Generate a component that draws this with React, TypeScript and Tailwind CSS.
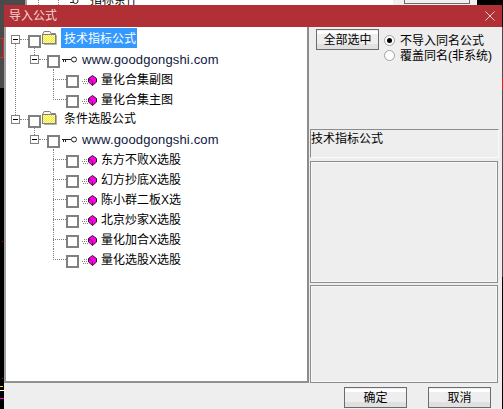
const FONT = "font-['Liberation_Sans','Noto_Sans_CJK_SC',sans-serif]";

function TreeBox() {
  return <div className="mt-[6px] h-[13px] w-[13px] shrink-0 border-2 border-[#808080] bg-white" />;
}

function Minus() {
  return (
    <div className="mt-[6px] flex h-[9px] w-[9px] shrink-0 items-center justify-center border border-[#808080] bg-white">
      <div className="h-px w-[5px] bg-black" />
    </div>
  );
}

function Folder() {
  return (
    <svg width="15" height="14" viewBox="0 0 15 14" className="mt-[2px] ml-[1px] shrink-0">
      <defs>
        <pattern id="dither" width="2" height="2" patternUnits="userSpaceOnUse">
          <rect width="2" height="2" fill="#f6f000" />
          <rect width="1" height="1" fill="#fffbe0" />
          <rect x="1" y="1" width="1" height="1" fill="#fffbe0" />
        </pattern>
      </defs>
      <path d="M0.5 3.5 L2 0.5 H8 L9 2.5 H13.5 V4 H0.5 Z" fill="#f8f8e8" stroke="#808080" />
      <rect x="0.5" y="3.5" width="13" height="9" fill="url(#dither)" stroke="#808080" />
      <path d="M14.5 4 V13.5 H2" stroke="#b0b0b0" fill="none" />
    </svg>
  );
}

function KeyIcon() {
  return (
    <svg width="15" height="7" viewBox="0 0 15 7" className="mt-[7px] ml-[2px] shrink-0">
      <path d="M0 3.5 H9 M1.5 3.5 V6 M3.5 3.5 V6" stroke="#222" fill="none" />
      <circle cx="12" cy="3.5" r="2.5" fill="white" stroke="#222" />
    </svg>
  );
}

function Gem() {
  return (
    <svg width="16" height="11" viewBox="0 0 16 11" className="mt-[6px] ml-[2px] shrink-0">
      <path d="M3 4.5 H7 M1 6.5 H7 M2 8.5 H7" stroke="#808080" strokeDasharray="1 1" />
      <path d="M11.5 0.5 L15.5 3.5 V7 L11.5 10.5 L7.5 7 V3.5 Z" fill="#ff00e6" stroke="#202020" />
      <path d="M7.5 3.5 L11.5 6 V10.5" fill="none" stroke="#8a0080" />
    </svg>
  );
}

function Leaf({ text, last }: { text: string; last?: boolean }) {
  return (
    <div className="relative flex h-5 pl-[60px]">
      <div className={"absolute left-[47px] top-0 w-px border-l border-dotted border-[#808080] " + (last ? "h-[11px]" : "h-5")} />
      <div className="absolute left-[47px] top-[10px] w-[13px] border-t border-dotted border-[#808080]" />
      <TreeBox />
      <Gem />
      <span className="ml-[4px] pt-px text-[12px] leading-5 text-black">{text}</span>
    </div>
  );
}

function Site() {
  return (
    <div className="relative flex h-5 pl-[24px]">
      <div className="absolute left-[28px] top-[-2px] h-[8px] w-px border-l border-dotted border-[#808080]" />
      <div className="absolute left-[33px] top-[10px] w-[8px] border-t border-dotted border-[#808080]" />
      <Minus />
      <div className="ml-[8px]"><TreeBox /></div>
      <KeyIcon />
      <span className="ml-[5px] pt-px text-[13px] leading-5 tracking-[0.16px] text-[#10183c]">www.goodgongshi.com</span>
    </div>
  );
}

function Root({ text, selected }: { text: string; selected?: boolean }) {
  return (
    <div className="relative flex h-5 pl-[5px]">
      <div className="absolute left-[14px] top-[10px] w-[8px] border-t border-dotted border-[#808080]" />
      <Minus />
      <div className="ml-[8px]"><TreeBox /></div>
      <Folder />
      <span className={"-mt-px ml-[4px] h-5 w-[76px] pl-[3px] pt-px text-[12px] leading-5 " + (selected ? "bg-[#3399ff] text-white" : "text-black")}>{text}</span>
    </div>
  );
}

function Btn({ text }: { text: string }) {
  return (
    <div className="flex h-[21px] w-[63px] shrink-0 items-center justify-center border border-[#6c6c6c] bg-[linear-gradient(#eeeeee_0,#eeeeee_1px,#ffffff_1px,#ffffff_4px,#eeeeee_4px,#eeeeee_14px,#e0e0e0_14px)] text-[12px] text-black">
      {text}
    </div>
  );
}

function Radio({ on, text }: { on?: boolean; text: string }) {
  return (
    <div className="flex h-[15px] items-center">
      <div className="flex h-[11px] w-[11px] items-center justify-center rounded-full border border-[#a0a0a0] bg-white">
        {on && <div className="h-[5px] w-[5px] rounded-full bg-black" />}
      </div>
      <span className="ml-[5px] whitespace-nowrap pt-px text-[12px] leading-[15px] text-black">{text}</span>
    </div>
  );
}

export default function App() {
  return (
    <div className={"relative h-[409px] w-[503px] overflow-hidden bg-black " + FONT}>
      {/* what shows of the chart and the dialog behind */}
      <div className="absolute left-0 top-0 h-[88px] w-[4px] bg-[#4a4a4a]" />
      <div className="absolute left-0 top-[38px] h-[20px] w-[4px] border-y border-r border-[#f02020]" />
      <div className="absolute left-[2px] top-[241px] h-px w-px bg-[#e00000]" />
      <div className="absolute left-[2px] top-[378px] h-px w-px bg-[#e00000]" />
      <div className="absolute left-0 top-[386px] h-px w-[3px] bg-[#f0e000]" />
      <div className="absolute left-0 top-[390px] h-px w-[4px] bg-white" />
      <div className="absolute left-0 top-[398px] h-px w-[4px] bg-[#ff00e0]" />
      <div className="absolute left-[502px] top-[27px] h-[250px] w-px bg-[#4a4a4a]" />
      <div className="absolute left-[502px] top-[78px] h-[12px] w-px bg-[#e02020]" />

      <div className="flex h-[5px] overflow-hidden">
        <div className="w-[25px] bg-[#4a4a4a]" />
        <div className="w-[2px] bg-[#a0a0a0]" />
        <div className="relative w-[366px] bg-white">
          <div className="absolute left-[11px] top-0 h-[5px] w-px border-l border-dotted border-[#808080]" />
          <div className="absolute left-[31px] top-0 h-[5px] w-px border-l border-dotted border-[#808080]" />
          <svg width="9" height="5" viewBox="0 0 9 5" className="absolute left-[43px] top-0">
            <path d="M0 2.5 H4" stroke="#222" fill="none" />
            <circle cx="5.5" cy="1" r="2.5" fill="white" stroke="#222" />
          </svg>
          <span className="absolute left-[63px] top-[-10px] text-[12px] leading-[20px] text-black">指标条件</span>
        </div>
        <div className="w-[84px] bg-[#f0f0f0] pl-[11px]">
          <div className="h-[4px] w-[66px] border-x border-b border-[#6c6c6c]" />
        </div>
      </div>
      <div className="relative ml-[4px] flex h-[404px] w-[498px] flex-col bg-[#eeeeee]">
        <div className="flex h-[22px] shrink-0 items-center justify-between bg-[#b03035] pl-[5px] pr-[7px] text-[12px] text-[#f0d8d8]">
          <span>导入公式</span>
          <svg width="10" height="10" viewBox="0 0 10 10"><path d="M0.5 0.5 L9.5 9.5 M9.5 0.5 L0.5 9.5" stroke="#ecd0d0" /></svg>
        </div>
        <div className="flex h-[356px] shrink-0">
          <div className="relative h-[356px] w-[305px] shrink-0 border-r-2 border-b-2 border-l-2 border-r-[#8c8c8c] border-b-[#909090] border-l-[#a0a0a0] bg-white pt-[2px]">
            <div className="absolute left-[9px] top-[16px] h-[72px] w-px border-l border-dotted border-[#808080]" />
            <Root text="技术指标公式" selected />
            <Site />
            <Leaf text="量化合集副图" />
            <Leaf text="量化合集主图" last />
            <Root text="条件选股公式" />
            <Site />
            <Leaf text="东方不败X选股" />
            <Leaf text="幻方抄底X选股" />
            <Leaf text="陈小群二板X选" />
            <Leaf text="北京炒家X选股" />
            <Leaf text="量化加合X选股" />
            <Leaf text="量化选股X选股" last />
          </div>
          <div className="w-[193px] pl-[1px]">
            <div className="flex h-[102px] pl-[6px] pt-[2px]">
              <Btn text="全部选中" />
              <div className="ml-[5px] pt-[4px]">
                <Radio on text="不导入同名公式" />
                <Radio text="覆盖同名(非系统)" />
              </div>
            </div>
            <div className="h-[29px] w-[189px] border border-[#8c8c8c] border-r-[#fafafa] border-b-[#fafafa] text-[12px] leading-[18px] text-black">技术指标公式</div>
            <div className="mt-[3px] h-[122px] w-[188px] border border-[#8c8c8c] shadow-[inset_0_0_0_1px_#f8f8f8]" />
            <div className="mt-[2px] h-[98px] w-[188px] border border-[#8c8c8c] shadow-[inset_0_0_0_1px_#f8f8f8]" />
          </div>
        </div>
        <div className="flex flex-1 items-end justify-end gap-[21px] pb-px pr-[11px]">
          <Btn text="确定" />
          <Btn text="取消" />
        </div>
      </div>
    </div>
  );
}
